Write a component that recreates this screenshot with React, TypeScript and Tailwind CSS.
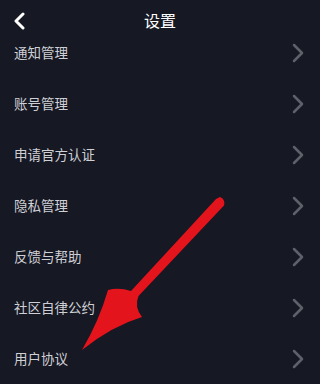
const ITEMS = ['通知管理', '账号管理', '申请官方认证', '隐私管理', '反馈与帮助', '社区自律公约', '用户协议'];

export default function App() {
  return (
    <div
      className="relative h-[384px] w-[320px] overflow-hidden bg-[#161823] text-[#cfd0d6]"
      style={{ fontFamily: '"Noto Sans CJK SC", "Noto Sans", sans-serif' }}
    >
      <header className="relative flex h-[27px] justify-center">
        <svg className="absolute left-[12px] top-[12px]" width="16" height="18" viewBox="0 0 16 18">
          <polyline
            points="11,2 4,9 11,16"
            fill="none"
            stroke="#ffffff"
            strokeWidth="3"
            strokeLinecap="round"
            strokeLinejoin="round"
          />
        </svg>
        <h1 className="pt-[9px] text-[16px] leading-[22px] text-white">设置</h1>
      </header>

      <ul>
        {ITEMS.map((item) => (
          <li key={item} className="flex h-[51px] items-center justify-between pl-[14px] pr-[15px]">
            <span className="text-[13.5px] leading-none">{item}</span>
            <svg width="14" height="22" viewBox="0 0 14 22">
              <polyline
                points="3,3 11,11 3,19"
                fill="none"
                stroke="#5e606a"
                strokeWidth="2.5"
                strokeLinecap="round"
                strokeLinejoin="round"
              />
            </svg>
          </li>
        ))}
      </ul>

      <svg
        className="pointer-events-none absolute left-0 top-0"
        width="320"
        height="384"
        viewBox="0 0 320 384"
      >
        <path
          d="M216,199 L131,291 Q119,287 108,290 Q99,321 82,350 Q112,326 142,317 Q134,307 138.5,296 L224,205.5 Q225.5,199 220,197 Z"
          fill="#e3141c"
        />
      </svg>
    </div>
  );
}
